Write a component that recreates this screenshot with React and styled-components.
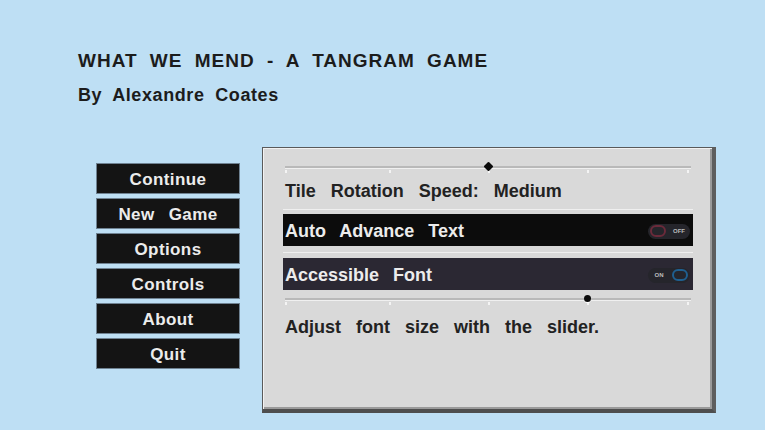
import styled, { createGlobalStyle } from "styled-components";

const GlobalStyle = createGlobalStyle`
  html, body {
    margin: 0;
    padding: 0;
    background: #bedff4;
  }
  body {
    font-family: "Liberation Sans", Arial, sans-serif;
  }
`;

const menuItems = ["Continue", "New Game", "Options", "Controls", "About", "Quit"];

const Toggle = ({ on }) => (
  <ToggleTrack>
    {on && <ToggleLabel>ON</ToggleLabel>}
    <ToggleKnob $on={on} />
    {!on && <ToggleLabel>OFF</ToggleLabel>}
  </ToggleTrack>
);

const Slider = ({ ticks, value, knob }) => (
  <SliderWrap>
    <SliderTrack />
    {ticks.map((t) => (
      <Tick key={t} style={{ left: `${t}%` }} />
    ))}
    <Knob $shape={knob} style={{ left: `${value}%` }} />
  </SliderWrap>
);

const App = () => {
  return (
    <>
      <GlobalStyle />
      <Page>
        <Header>
          <Title>WHAT WE MEND - A TANGRAM GAME</Title>
          <Byline>By Alexandre Coates</Byline>
        </Header>
        <Main>
          <Menu>
            {menuItems.map((item) => (
              <MenuButton key={item}>{item}</MenuButton>
            ))}
          </Menu>
          <Panel>
            <Slider ticks={[0, 25.5, 50, 74.5, 99]} value={50} knob="diamond" />
            <SettingText>Tile Rotation Speed: Medium</SettingText>
            <Divider />
            <OptionRow $dark>
              <span>Auto Advance Text</span>
              <Toggle on={false} />
            </OptionRow>
            <Divider $wide />
            <OptionRow>
              <span>Accessible Font</span>
              <Toggle on />
            </OptionRow>
            <SliderGap />
            <Slider ticks={[0, 25.5, 50, 74.5, 99]} value={74.5} knob="dot" />
            <SettingText $gap>Adjust font size with the slider.</SettingText>
          </Panel>
        </Main>
      </Page>
    </>
  );
};

const Page = styled.div`
  width: 765px;
  height: 430px;
  overflow: hidden;
  box-sizing: border-box;
  padding: 49px 0 0 78px;
`;

const Header = styled.div`
  display: flex;
  flex-direction: column;
  gap: 10px;
  color: #1c1c1c;
`;

const Title = styled.h1`
  margin: 0;
  font-size: 19px;
  font-weight: 700;
  letter-spacing: 1px;
  word-spacing: 6px;
  line-height: 24px;
`;

const Byline = styled.div`
  font-size: 18px;
  font-weight: 700;
  letter-spacing: 0.6px;
  word-spacing: 5px;
  line-height: 24px;
`;

const Main = styled.div`
  display: flex;
  align-items: flex-start;
  gap: 22px;
  margin: 40px 0 0 18px;
`;

const Menu = styled.div`
  display: flex;
  flex-direction: column;
  gap: 4px;
  margin-top: 16px;
  width: 144px;
`;

const MenuButton = styled.div`
  height: 31px;
  box-sizing: border-box;
  border: 1px solid #6f8292;
  background: #141414;
  color: #ececec;
  font-size: 17px;
  font-weight: 700;
  letter-spacing: 0.4px;
  word-spacing: 9px;
  padding-top: 3px;
  display: flex;
  align-items: center;
  justify-content: center;
`;

const Panel = styled.div`
  width: 454px;
  height: 266px;
  box-sizing: border-box;
  background: #d9d9d9;
  border-top: 1px solid #5a5a5a;
  border-left: 1px solid #5a5a5a;
  border-right: 4px solid #5e5e5e;
  border-bottom: 4px solid #4e4e4e;
  box-shadow: inset 1px 1px 0 #f2f2f2, inset -2px -2px 0 #9a9a9a;
  padding: 14px 19px 0 20px;
  display: flex;
  flex-direction: column;
  color: #222;
`;

const SliderWrap = styled.div`
  position: relative;
  height: 10px;
  margin: 0 2px;
`;

const SliderTrack = styled.div`
  position: absolute;
  left: 0;
  right: 0;
  top: 4px;
  height: 2px;
  background: #b9b9b9;
  border-bottom: 1px solid #f0f0f0;
`;

const Tick = styled.div`
  position: absolute;
  top: 8px;
  width: 2px;
  height: 3px;
  background: #f4f4f4;
`;

const Knob = styled.div`
  position: absolute;
  top: 1px;
  width: 7px;
  height: 7px;
  margin-left: -3px;
  background: #0b0b0b;
  border-radius: ${({ $shape }) => ($shape === "dot" ? "50%" : "1px")};
  transform: ${({ $shape }) => ($shape === "diamond" ? "rotate(45deg)" : "none")};
  box-shadow: ${({ $shape }) => ($shape === "dot" ? "0 1px 0 #fff" : "none")};
`;

const SliderGap = styled.div`
  height: 4px;
`;

const SettingText = styled.div`
  font-size: 18px;
  font-weight: 700;
  word-spacing: 10px;
  line-height: 24px;
  margin-top: ${({ $gap }) => ($gap ? "11px" : "7px")};
  margin-left: 2px;
`;

const Divider = styled.div`
  height: 1px;
  background: #efefef;
  margin: ${({ $wide }) => ($wide ? "6px 0 5px" : "6px 0 4px")};
`;

const OptionRow = styled.div`
  height: 32px;
  box-sizing: border-box;
  background: ${({ $dark }) => ($dark ? "#0c0c0c" : "#2b2833")};
  color: #ececec;
  font-size: 18px;
  font-weight: 700;
  word-spacing: 9px;
  display: flex;
  align-items: center;
  justify-content: space-between;
  padding: 2px 3px 0 2px;
`;

const ToggleTrack = styled.div`
  width: 42px;
  height: 15px;
  border-radius: 8px;
  background: #25252b;
  display: flex;
  align-items: center;
  justify-content: space-between;
  padding: 0 2px;
  box-sizing: border-box;
`;

const ToggleKnob = styled.div`
  width: 16px;
  height: 12px;
  box-sizing: border-box;
  border-radius: 6px;
  border: 2px solid ${({ $on }) => ($on ? "#1f5f8f" : "#6b2a3a")};
`;

const ToggleLabel = styled.span`
  font-size: 6px;
  font-weight: 700;
  color: #bdbdbd;
  width: 18px;
  text-align: center;
  word-spacing: 0;
`;

export default App;
